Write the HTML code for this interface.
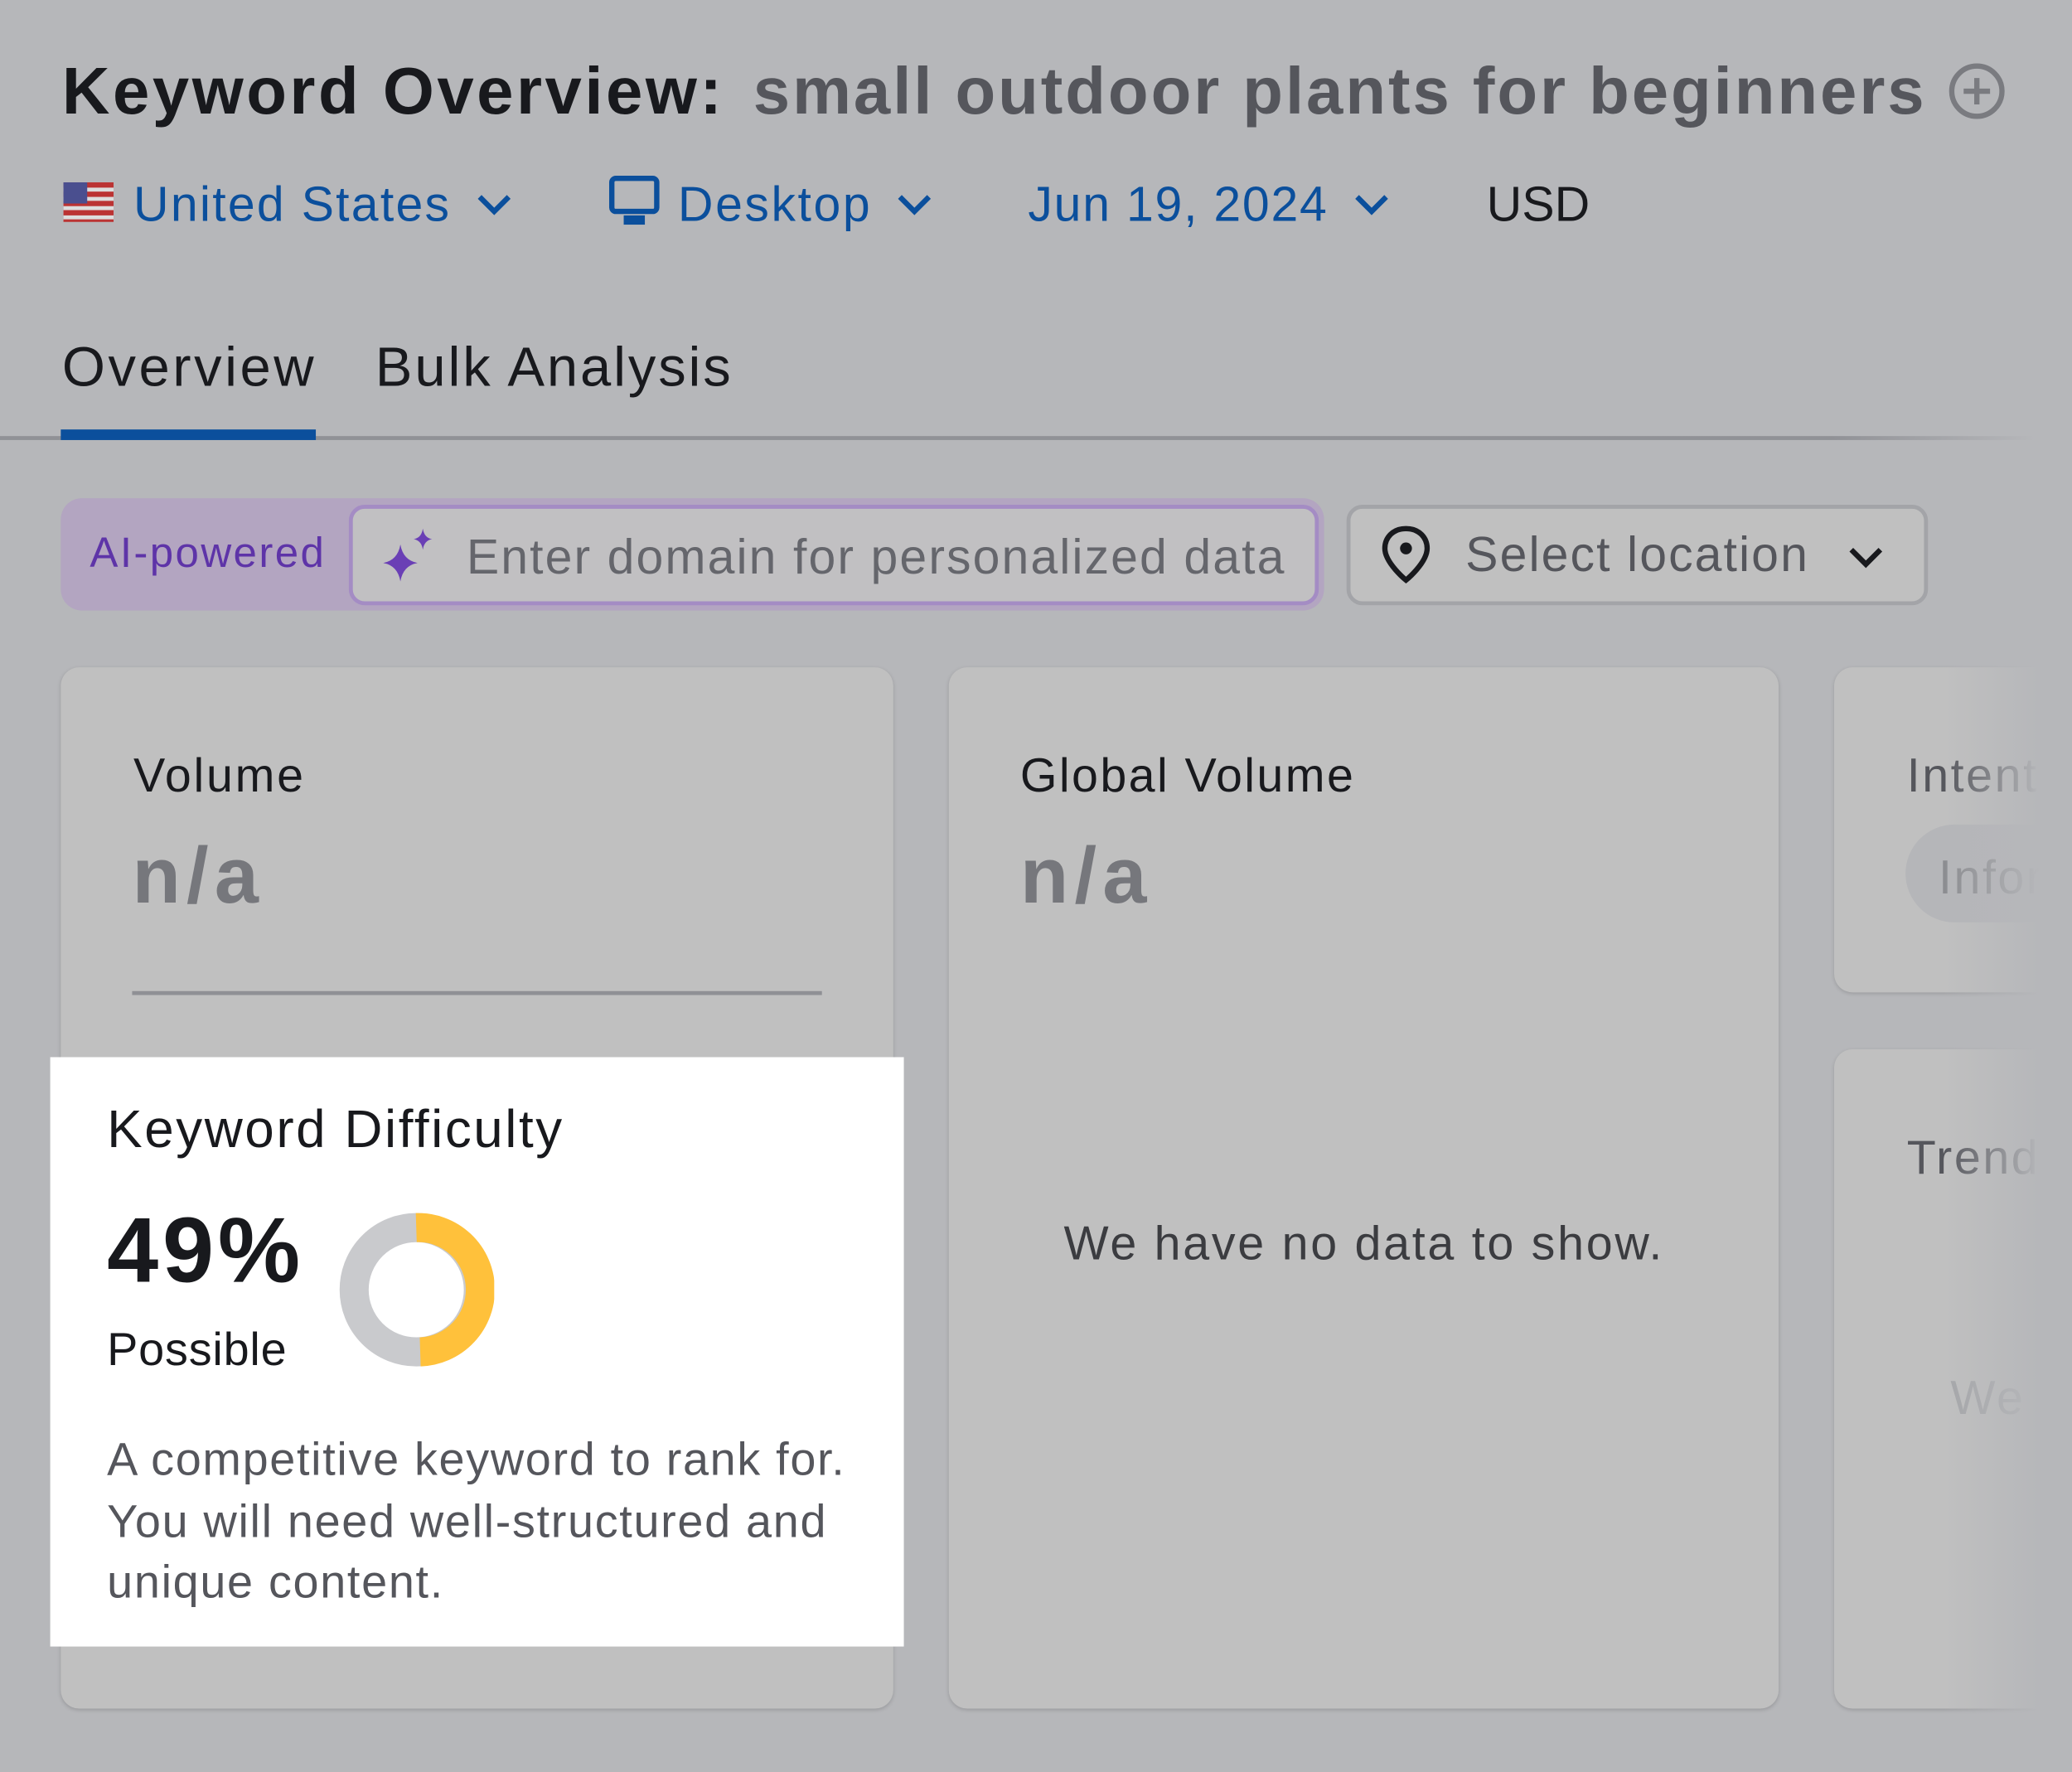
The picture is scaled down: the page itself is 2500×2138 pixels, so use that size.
<!DOCTYPE html>
<html><head><meta charset="utf-8"><style>
html,body{margin:0;padding:0;width:2500px;height:2138px;overflow:hidden;background:#b6b7ba}
#s{position:absolute;left:0;top:0;width:1568px;height:1341px;transform:scale(1.594388);transform-origin:0 0;font-family:"Liberation Sans",sans-serif;background:#b6b7ba}
.a{position:absolute;white-space:nowrap}
.card{position:absolute;background:#c0c0c0;border-radius:14px;box-shadow:0 1px 3px rgba(0,0,0,.15)}
.blue{color:#0b4f9c}
</style></head><body><div id="s">
<div class="a" style="left:47px;top:40px;font-size:50px;font-weight:bold;color:#18191d;letter-spacing:2.2px">Keyword Overview:</div>
<div class="a" style="left:570px;top:40px;font-size:50px;font-weight:bold;color:#55565c;letter-spacing:1.85px">small outdoor plants for beginners</div>
<svg class="a" style="left:1474px;top:47px" width="44" height="44" viewBox="0 0 44 44"><circle cx="22" cy="22" r="19" fill="none" stroke="#7a7b80" stroke-width="4"/><path d="M22 12v20M12 22h20" stroke="#7a7b80" stroke-width="4"/></svg>
<svg class="a" style="left:48px;top:138px" width="38" height="30"><rect width="38" height="30" fill="#b33"/><rect y="4" width="38" height="3" fill="#ddd"/><rect y="11" width="38" height="3" fill="#ddd"/><rect y="18" width="38" height="3" fill="#ddd"/><rect y="25" width="38" height="3" fill="#ddd"/><rect width="18" height="16" fill="#4a4f8f"/></svg>
<div class="a blue" style="left:101px;top:134px;font-size:37px;letter-spacing:1.4px">United States</div>
<svg class="a" style="left:360px;top:145px" width="28" height="20"><path d="M3 4l11 11 11-11" fill="none" stroke="#0b4f9c" stroke-width="4"/></svg>
<svg class="a" style="left:460px;top:133px" width="40" height="40"><rect x="3" y="2" width="34" height="25" rx="3" fill="none" stroke="#0b4f9c" stroke-width="4"/><rect x="12" y="30" width="16" height="7" fill="#0b4f9c"/></svg>
<div class="a blue" style="left:513px;top:134px;font-size:37px;letter-spacing:1.6px">Desktop</div>
<svg class="a" style="left:678px;top:145px" width="28" height="20"><path d="M3 4l11 11 11-11" fill="none" stroke="#0b4f9c" stroke-width="4"/></svg>
<div class="a blue" style="left:778px;top:134px;font-size:37px;letter-spacing:1.1px">Jun 19, 2024</div>
<svg class="a" style="left:1024px;top:145px" width="28" height="20"><path d="M3 4l11 11 11-11" fill="none" stroke="#0b4f9c" stroke-width="4"/></svg>
<div class="a" style="left:1125px;top:134px;font-size:37px;color:#18191d">USD</div>
<div class="a" style="left:47px;top:254px;font-size:42px;color:#18191d;letter-spacing:2.2px">Overview</div>
<div class="a" style="left:284px;top:254px;font-size:42px;color:#18191d;letter-spacing:1.8px">Bulk Analysis</div>
<div class="a" style="left:0;top:330px;width:1540px;height:3px;background:linear-gradient(90deg,#909196 90%,rgba(144,145,150,0))"></div>
<div class="a" style="left:46px;top:325px;width:193px;height:8px;background:#0b4f9c"></div>
<div class="a" style="left:46px;top:377px;width:956px;height:85px;border-radius:16px;background:#b3a5c1"></div>
<div class="a" style="left:68px;top:400px;font-size:32px;color:#5e34a8;letter-spacing:1.5px">AI-powered</div>
<div class="a" style="left:264px;top:382px;width:728px;height:70px;border:3px solid #a48cc4;border-radius:12px;background:#c1c0c2"></div>
<svg class="a" style="left:288px;top:400px" width="42" height="42"><path d="M15 12 Q17 24 28 26 Q17 28 15 40 Q13 28 2 26 Q13 24 15 12Z" fill="#6a3fb5"/><path d="M32 0 Q33 7 39 8 Q33 9 32 16 Q31 9 25 8 Q31 7 32 0Z" fill="#6a3fb5"/></svg>
<div class="a" style="left:353px;top:401px;font-size:37px;color:#65666c;letter-spacing:1.3px">Enter domain for personalized data</div>
<div class="a" style="left:1019px;top:382px;width:434px;height:70px;border:3px solid #a3a4a8;border-radius:12px;background:#c0c0c0"></div>
<svg class="a" style="left:1044px;top:397px" width="40" height="46"><path d="M20 3C10 3 4 10 4 18c0 11 16 24 16 24s16-13 16-24C36 10 30 3 20 3z" fill="none" stroke="#18191d" stroke-width="4"/><circle cx="20" cy="18" r="4.5" fill="#18191d"/></svg>
<div class="a" style="left:1109px;top:399px;font-size:37px;color:#55565c;letter-spacing:1.3px">Select location</div>
<svg class="a" style="left:1398px;top:412px" width="28" height="20"><path d="M3 4l11 11 11-11" fill="none" stroke="#18191d" stroke-width="4"/></svg>
<div class="card" style="left:46px;top:505px;width:630px;height:788px"></div>
<div class="a" style="left:101px;top:566px;font-size:36px;color:#18191d;letter-spacing:1.7px">Volume</div>
<div class="a" style="left:100px;top:628px;font-size:60px;font-weight:bold;color:#76777c;letter-spacing:4.5px">n/a</div>
<div class="a" style="left:100px;top:750px;width:522px;height:3px;background:#8f9095"></div>
<div class="card" style="left:718px;top:505px;width:628px;height:788px"></div>
<div class="a" style="left:772px;top:566px;font-size:36px;color:#18191d;letter-spacing:1.5px">Global Volume</div>
<div class="a" style="left:772px;top:628px;font-size:60px;font-weight:bold;color:#76777c;letter-spacing:4.5px">n/a</div>
<div class="a" style="left:805px;top:920px;font-size:36px;color:#3b3c40;letter-spacing:1.7px">We have no data to show.</div>
<div class="card" style="left:1388px;top:505px;width:250px;height:246px"></div>
<div class="a" style="left:1443px;top:566px;font-size:36px;color:#55565c;letter-spacing:1.6px">Intent</div>
<div class="a" style="left:1442px;top:624px;width:200px;height:74px;border-radius:37px;background:#b5b6b9"></div>
<div class="a" style="left:1467px;top:643px;font-size:36px;color:#8b8c90;letter-spacing:1.6px">Infor</div>
<div class="card" style="left:1388px;top:794px;width:250px;height:499px"></div>
<div class="a" style="left:1443px;top:855px;font-size:36px;color:#55565c;letter-spacing:1.6px">Trend</div>
<div class="a" style="left:1476px;top:1037px;font-size:36px;color:#a5a6a9;letter-spacing:1.6px">We h</div>
<div class="a" style="left:1470px;top:490px;width:98px;height:820px;background:linear-gradient(90deg,rgba(182,183,186,0) 0%,rgba(182,183,186,.6) 45%,#b6b7ba 75%)"></div>
<div class="a" style="left:38px;top:800px;width:646px;height:446px;background:#fff"></div>
<div class="a" style="left:81px;top:833px;font-size:40px;color:#18191d;letter-spacing:1.6px">Keyword Difficulty</div>
<div class="a" style="left:81px;top:906px;font-size:70px;font-weight:bold;color:#18191d;letter-spacing:3px">49%</div>
<div class="a" style="left:81px;top:1002px;font-size:35px;color:#18191d;letter-spacing:0.5px">Possible</div>
<svg class="a" style="left:256px;top:917px" width="118" height="118" viewBox="0 0 118 118"><circle cx="59" cy="59" r="47" fill="none" stroke="#c9cacd" stroke-width="22"/><path d="M59 12 A47 47 0 0 1 62 106" fill="none" stroke="#ffc13b" stroke-width="22"/></svg>
<div class="a" style="left:81px;top:1082px;font-size:35px;line-height:46.5px;color:#55565c;letter-spacing:1.05px">A competitive keyword to rank for.<br>You will need well-structured and<br>unique content.</div>
</div></body></html>
